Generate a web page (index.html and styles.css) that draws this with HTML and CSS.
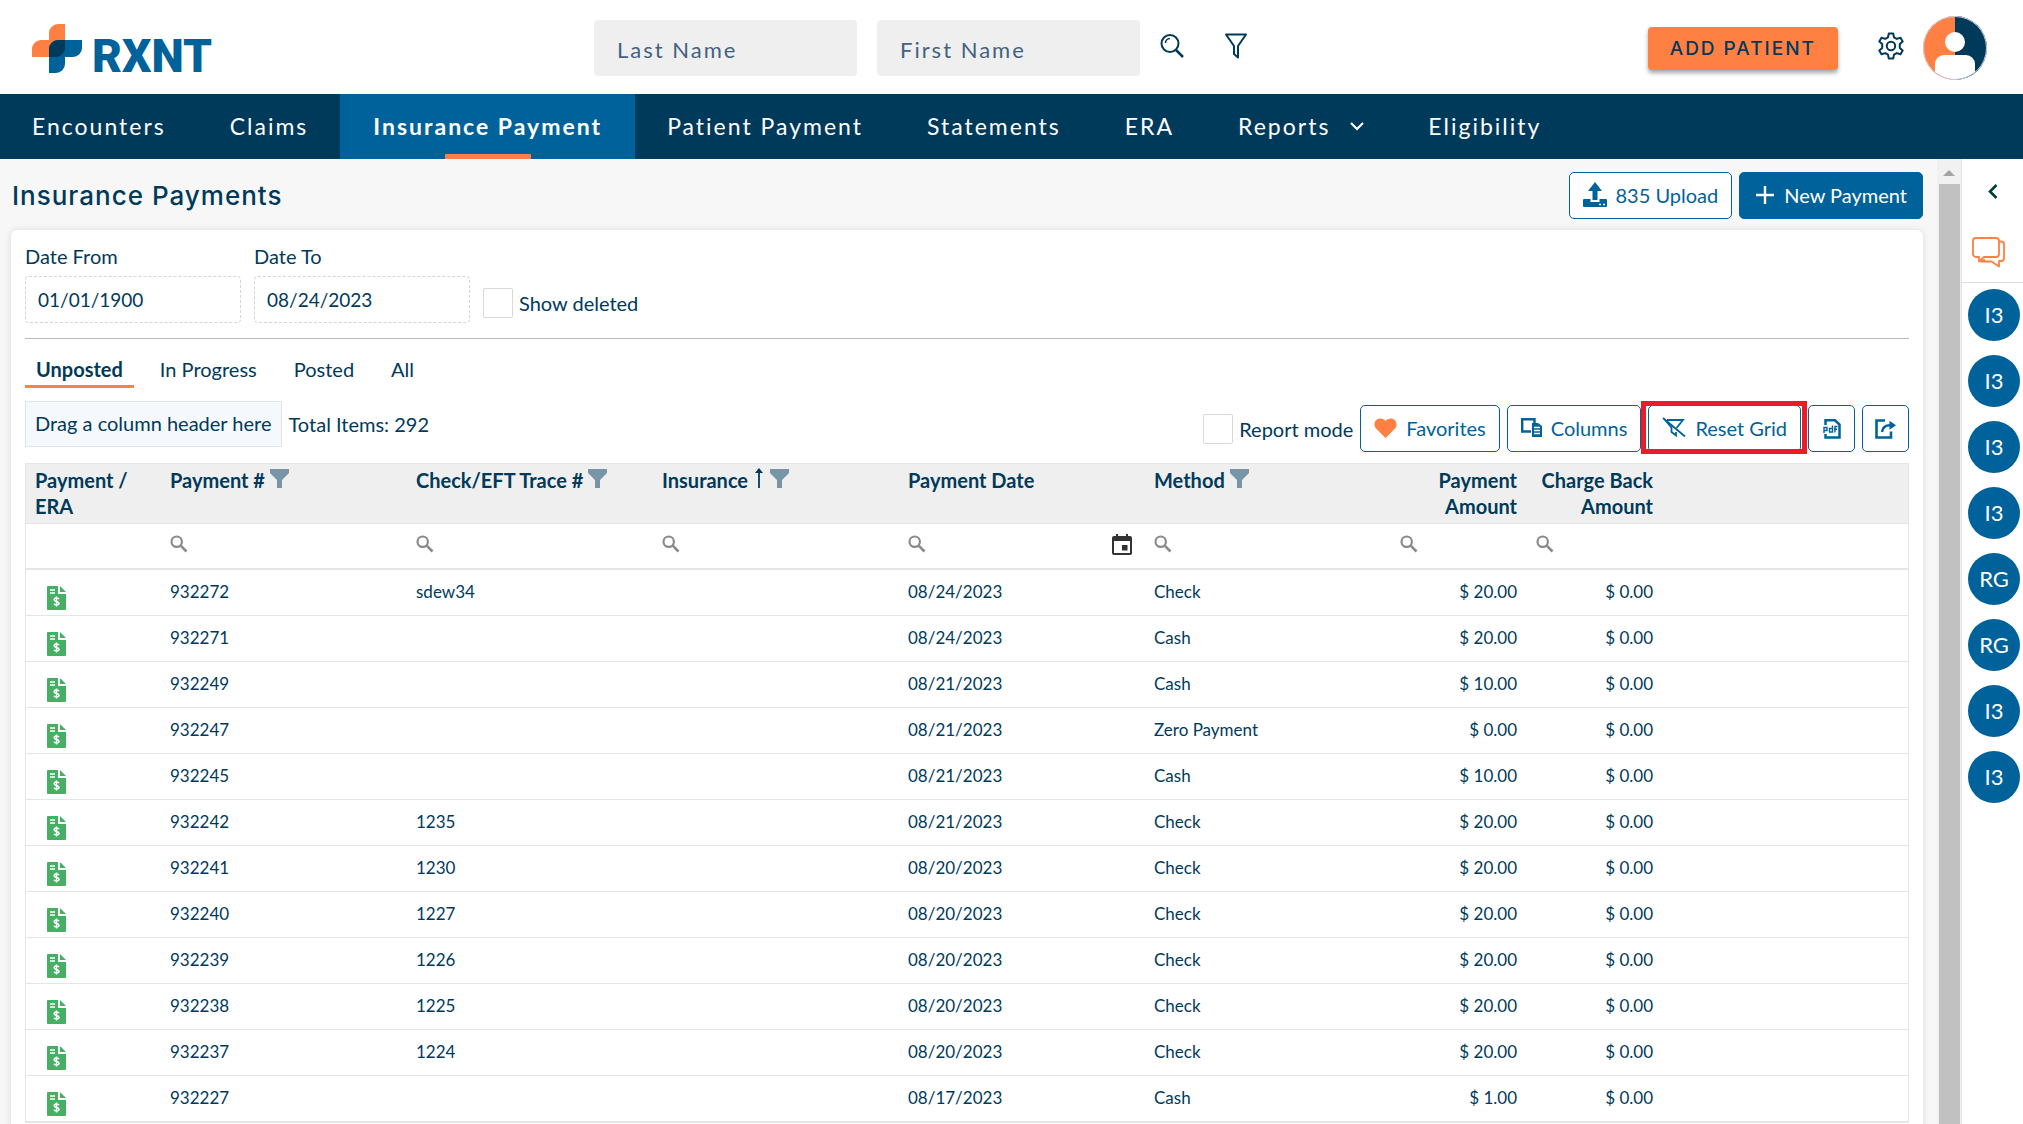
FILE: index.html
```
<!DOCTYPE html>
<html lang="en">

<head>
  <meta charset="UTF-8">
  <meta name="viewport" content="width=device-width, initial-scale=1.0">
  <title>RXNT - Insurance Payments</title>
  <link rel="stylesheet" href="styles.css">
</head>

<body>

  <!-- Shared icons -->
  <svg class="sprite" aria-hidden="true">
    <symbol id="icon-funnel" viewBox="0 0 19 19">
      <path d="M0 0H19V4L12 11V19H7V11L0 4Z" fill="currentColor" />
    </symbol>
    <symbol id="icon-search" viewBox="0 0 18 18">
      <circle cx="6.7" cy="6.7" r="5.2" fill="none" stroke="currentColor" stroke-width="2.2" />
      <path d="M10.7 10.7L16.5 16.5" stroke="currentColor" stroke-width="2.6" />
    </symbol>
    <symbol id="icon-file" viewBox="0 0 19 24">
      <path d="M1 0H11V8H19V23a1 1 0 0 1-1 1H1a1 1 0 0 1-1-1V1a1 1 0 0 1 1-1Z" fill="#45b063" />
      <path d="M13 0L19 6H13Z" fill="#45b063" />
      <path d="M3 4H8M3 7H8M9.500 10.500V20.500M12 13.200C11.500 12.300 10.700 12 9.500 12C8 12 7.200 12.700 7.200 13.700C7.200 16 12 14.900 12 17.300C12 18.400 11 19 9.500 19C8.200 19 7.400 18.600 7 17.700" fill="none" stroke="#fff" stroke-width="1.500" />
    </symbol>
  </svg>

  <header class="topbar">
    <a class="logo" href="#" aria-label="RXNT home">
      <svg width="50" height="49" viewBox="0 0 50 49">
        <path d="M33 0V33H0V25a9 9 0 0 1 9-9H17V9a9 9 0 0 1 9-9Z" fill="#ff8042" />
        <path d="M50 16V24a9 9 0 0 1-9 9H33V40a9 9 0 0 1-9 9H17V25a9 9 0 0 1 9-9Z" fill="#00629b" />
        <path d="M17 33V25a9 9 0 0 1 9-9H33V24a9 9 0 0 1-9 9Z" fill="#003a5b" />
      </svg>
      <span>RXNT</span>
    </a>

    <form class="patient-search">
      <input type="text" placeholder="Last Name" aria-label="Last Name">
      <input type="text" placeholder="First Name" aria-label="First Name">
      <button type="button" class="icon-btn" aria-label="Search">
        <svg width="24" height="26" viewBox="0 0 24 26" fill="none" stroke="currentColor" stroke-width="2">
          <circle cx="10" cy="10.500" r="8.500" />
          <path d="M16 17L23 24" stroke-width="2.500" />
          <path d="M5.500 10C5.500 7.500 7.500 5.500 10 5.500" stroke-width="1.600" />
        </svg>
      </button>
      <button type="button" class="icon-btn" aria-label="Filter">
        <svg width="24" height="26" viewBox="0 0 24 26" fill="none" stroke="currentColor" stroke-width="2">
          <path d="M2 1.500H22L14 13V24.500L10 21V13Z" stroke-linejoin="round" />
        </svg>
      </button>
    </form>

    <div class="account">
      <button type="button" class="add-patient">ADD PATIENT</button>
      <button type="button" class="icon-btn" aria-label="Settings">
        <svg width="28" height="28" viewBox="0 0 28 28" fill="none" stroke="currentColor" stroke-width="2" stroke-linejoin="round">
          <path d="M11.800 1.500H16.200L17 5.300L19.800 6.900L23.500 5.700L25.700 9.500L22.800 12.100V15.900L25.700 18.500L23.500 22.300L19.800 21.100L17 22.700L16.200 26.500H11.800L11 22.700L8.200 21.100L4.500 22.300L2.300 18.500L5.200 15.900V12.100L2.300 9.500L4.500 5.700L8.200 6.900L11 5.300Z" />
          <circle cx="14" cy="14" r="4.200" />
        </svg>
      </button>
      <button type="button" class="avatar" aria-label="Account">
        <svg width="64" height="64" viewBox="0 0 64 64">
          <path d="M32 0A32 32 0 0 0 32 64Z" fill="#ff8042" />
          <path d="M32 0A32 32 0 0 1 32 64Z" fill="#003a5b" />
          <circle cx="32" cy="26" r="10" fill="#fff" />
          <path d="M12 56V48a9 9 0 0 1 9-9H43a9 9 0 0 1 9 9V56A31.500 31.500 0 0 1 12 56Z" fill="#fff" />
          <circle cx="32" cy="32" r="31.500" fill="none" stroke="#ccd" stroke-width="1" />
        </svg>
      </button>
    </div>
  </header>

  <nav class="tabs-nav">
    <a href="#">Encounters</a>
    <a href="#">Claims</a>
    <a href="#" class="active">Insurance Payment</a>
    <a href="#">Patient Payment</a>
    <a href="#">Statements</a>
    <a href="#">ERA</a>
    <a href="#">Reports
      <svg width="14" height="10" viewBox="0 0 14 10" fill="none" stroke="currentColor" stroke-width="2.200"><path d="M1 2L7 8L13 2" /></svg>
    </a>
    <a href="#">Eligibility</a>
  </nav>

  <div class="page">
    <main class="content">
      <div class="page-head">
        <h1>Insurance Payments</h1>
        <div class="btn-group">
          <button type="button" class="btn">
            <svg width="24" height="26" viewBox="0 0 24 26" fill="currentColor">
              <path d="M12 0L19 9H14.500V18H9.500V9H5Z" />
              <path d="M1 17H7.500V20H16.500V17H23a1 1 0 0 1 1 1V24a1 1 0 0 1-1 1H1a1 1 0 0 1-1-1V18a1 1 0 0 1 1-1Z" />
              <path d="M16 22.500H18M20 22.500H22" stroke="#fff" stroke-width="1.500" />
            </svg>
            835 Upload
          </button>
          <button type="button" class="btn primary">
            <svg width="20" height="20" viewBox="0 0 20 20" stroke="currentColor" stroke-width="2.400"><path d="M10 1V19M1 10H19" /></svg>
            New Payment
          </button>
        </div>
      </div>

      <section class="panel">
        <div class="filters">
          <div class="field">
            <label for="dateFrom">Date From</label>
            <input type="text" id="dateFrom" value="01/01/1900">
          </div>
          <div class="field">
            <label for="dateTo">Date To</label>
            <input type="text" id="dateTo" value="08/24/2023">
          </div>
          <label class="check"><input type="checkbox"> Show deleted</label>
        </div>

        <div class="status-tabs">
          <button type="button" class="active">Unposted</button>
          <button type="button">In Progress</button>
          <button type="button">Posted</button>
          <button type="button">All</button>
        </div>

        <div class="toolbar">
          <div class="group-info">
            <div class="drop-zone">Drag a column header here</div>
            <span>Total Items: 292</span>
          </div>
          <div class="btn-group">
            <label class="check"><input type="checkbox"> Report mode</label>
            <button type="button" class="btn">
              <svg width="23" height="20" viewBox="0 0 23 20"><path d="M11.500 20L2 10.500C-3 4.500 5-3.500 11.500 3C18-3.500 26 4.500 21 10.500Z" fill="#ff8042" /></svg>
              Favorites
            </button>
            <button type="button" class="btn">
              <svg width="21" height="20" viewBox="0 0 21 20" fill="none" stroke="currentColor">
                <path d="M10 13.500H1.200V1.200H13.500V5" stroke-width="2.400" />
                <path d="M11 5H17L21 8V19H11Z" fill="currentColor" stroke="none" />
                <path d="M13 9.500H19M13 12.500H19M13 15.500H19" stroke="#fff" stroke-width="1.300" />
              </svg>
              Columns
            </button>
            <button type="button" class="btn highlighted">
              <svg width="24" height="21" viewBox="0 0 24 21" fill="none" stroke="currentColor" stroke-width="1.800">
                <path d="M5 3H21L14.500 11M9.500 10V15L14 18.500V15" />
                <path d="M3 3L9.500 10.500" />
                <path d="M1 1L23 19.500" />
              </svg>
              Reset Grid
            </button>
            <button type="button" class="btn square" aria-label="Export to PDF">
              <svg width="18" height="20" viewBox="0 0 18 20" fill="none" stroke="currentColor">
                <path d="M2.500 6V1.300H12L16.500 5.500V18.500H2.500V15" stroke-width="2.500" />
                <path d="M1 14V8.500H4V11.500H1M9.500 6.500V13H6.500V9.500H9.500M12 13.500V7.500H14.500M11 10.200H14" stroke-width="1.400" />
              </svg>
            </button>
            <button type="button" class="btn square" aria-label="Share">
              <svg width="21" height="20" viewBox="0 0 21 20" fill="none" stroke="currentColor">
                <path d="M10 1.500H1.500V18.500H16V12.500" stroke-width="2.600" />
                <path d="M7 13C7.500 8.500 10 6.300 15 6.300" stroke-width="2.400" />
                <path d="M14.500 1.800L21 6.300L14.500 10.800Z" fill="currentColor" stroke="none" />
              </svg>
            </button>
          </div>
        </div>

        <table class="grid">
          <colgroup>
            <col class="col-type">
            <col class="col-wide">
            <col class="col-wide">
            <col class="col-wide">
            <col class="col-wide">
            <col class="col-wide">
            <col class="col-amount">
            <col class="col-amount">
            <col>
          </colgroup>
          <thead>
            <tr>
              <th>Payment /<br>ERA</th>
              <th>Payment # <svg class="funnel"><use href="#icon-funnel" /></svg></th>
              <th>Check/EFT Trace # <svg class="funnel"><use href="#icon-funnel" /></svg></th>
              <th>Insurance
                <svg class="sort" viewBox="0 0 8 20"><path d="M4 3V20" stroke="currentColor" stroke-width="1.800" /><path d="M4 0L8 5H0Z" fill="currentColor" /></svg>
                <svg class="funnel"><use href="#icon-funnel" /></svg></th>
              <th>Payment Date</th>
              <th>Method <svg class="funnel"><use href="#icon-funnel" /></svg></th>
              <th class="amount">Payment<br>Amount</th>
              <th class="amount">Charge Back<br>Amount</th>
              <th></th>
            </tr>
            <tr class="filter-row">
              <td></td>
              <td><div class="cell-filter"><svg class="mag"><use href="#icon-search" /></svg><input type="text" aria-label="Filter payment number"></div></td>
              <td><div class="cell-filter"><svg class="mag"><use href="#icon-search" /></svg><input type="text" aria-label="Filter trace number"></div></td>
              <td><div class="cell-filter"><svg class="mag"><use href="#icon-search" /></svg><input type="text" aria-label="Filter insurance"></div></td>
              <td>
                <div class="cell-filter">
                  <svg class="mag"><use href="#icon-search" /></svg>
                  <input type="text" aria-label="Filter payment date">
                  <button type="button" class="calendar" aria-label="Pick a date">
                    <svg width="20" height="21" viewBox="0 0 20 21">
                      <path d="M2 2H4V0H6V2H14V0H16V2H18a2 2 0 0 1 2 2V19a2 2 0 0 1-2 2H2a2 2 0 0 1-2-2V4a2 2 0 0 1 2-2ZM2 7V19H18V7ZM10 11H15.500V16.500H10Z" fill="currentColor" fill-rule="evenodd" />
                    </svg>
                  </button>
                </div>
              </td>
              <td><div class="cell-filter"><svg class="mag"><use href="#icon-search" /></svg><input type="text" aria-label="Filter method"></div></td>
              <td><div class="cell-filter"><svg class="mag"><use href="#icon-search" /></svg><input type="text" aria-label="Filter payment amount"></div></td>
              <td><div class="cell-filter"><svg class="mag"><use href="#icon-search" /></svg><input type="text" aria-label="Filter charge back amount"></div></td>
              <td></td>
            </tr>
          </thead>
          <tbody id="gridRows"></tbody>
        </table>
      </section>
    </main>

    <div class="scrollbar" aria-hidden="true">
      <svg width="12" height="6" viewBox="0 0 12 6"><path d="M6 0L12 6H0Z" fill="#a3a3a3" /></svg>
      <div class="thumb"></div>
    </div>

    <aside class="chat-bar">
      <button type="button" class="collapse" aria-label="Expand">
        <svg width="10" height="15" viewBox="0 0 10 15" fill="none" stroke="#00402f" stroke-width="2.600"><path d="M8.500 1L2 7.500L8.500 14" /></svg>
      </button>
      <button type="button" class="chat" aria-label="Messages">
        <svg width="33" height="31" viewBox="0 0 33 31" fill="none" stroke="#ff8042" stroke-width="1.800" stroke-linejoin="round">
          <path d="M4 1H24a3 3 0 0 1 3 3V17a3 3 0 0 1-3 3H12L7 24.500V20H4a3 3 0 0 1-3-3V4a3 3 0 0 1 3-3Z" />
          <path d="M27 4.500H29a3 3 0 0 1 3 3V21a3 3 0 0 1-3 3H27V29.500L19.500 24.500H9L13 22.500" />
        </svg>
      </button>
      <div class="people">
        <button type="button">I3</button>
        <button type="button">I3</button>
        <button type="button">I3</button>
        <button type="button">I3</button>
        <button type="button">RG</button>
        <button type="button">RG</button>
        <button type="button">I3</button>
        <button type="button">I3</button>
      </div>
    </aside>
  </div>

  <script>
    // payment #, trace #, date, method, payment amount
    const payments = [
      ['932272', 'sdew34', '08/24/2023', 'Check', '20.00'],
      ['932271', '', '08/24/2023', 'Cash', '20.00'],
      ['932249', '', '08/21/2023', 'Cash', '10.00'],
      ['932247', '', '08/21/2023', 'Zero Payment', '0.00'],
      ['932245', '', '08/21/2023', 'Cash', '10.00'],
      ['932242', '1235', '08/21/2023', 'Check', '20.00'],
      ['932241', '1230', '08/20/2023', 'Check', '20.00'],
      ['932240', '1227', '08/20/2023', 'Check', '20.00'],
      ['932239', '1226', '08/20/2023', 'Check', '20.00'],
      ['932238', '1225', '08/20/2023', 'Check', '20.00'],
      ['932237', '1224', '08/20/2023', 'Check', '20.00'],
      ['932227', '', '08/17/2023', 'Cash', '1.00']
    ];

    document.getElementById('gridRows').innerHTML = payments.map(([number, trace, date, method, amount]) => `
      <tr>
        <td class="type"><svg><use href="#icon-file" /></svg></td>
        <td>${number}</td>
        <td>${trace}</td>
        <td></td>
        <td>${date}</td>
        <td>${method}</td>
        <td class="amount">$ ${amount}</td>
        <td class="amount">$ 0.00</td>
        <td></td>
      </tr>`).join('');
  </script>

</body>

</html>
```
FILE: styles.css
```
* {
  box-sizing: border-box;
}

body {
  display: flex;
  flex-direction: column;
  height: 100vh;
  margin: 0;
  overflow: hidden;
  font-family: Lato, sans-serif;
  font-size: 20px;
  line-height: 24px;
  color: #003a5b;
  background-color: #f7f7f7;
}

button,
input {
  font: inherit;
  color: inherit;
}

button {
  padding: 0;
  border: none;
  background: none;
  cursor: pointer;
}

svg {
  display: block;
  flex: none;
}

.sprite {
  display: none;
}

/* Top bar */
.topbar {
  display: flex;
  flex: none;
  align-items: center;
  height: 94px;
  padding: 2px 36px 0 32px;
  background-color: white;
}

.logo {
  display: flex;
  flex: 0 0 562px;
  align-items: flex-end;
  gap: 10px;
  font-family: Roboto, sans-serif;
  font-size: 46px;
  font-weight: 900;
  line-height: 34px;
  color: #00629b;
  text-decoration: none;
}

.patient-search {
  display: flex;
  align-items: center;
  gap: 20px;
}

.patient-search input {
  width: 263px;
  height: 56px;
  padding: 2px 23px 0;
  border: none;
  border-radius: 4px;
  background-color: #efefef;
  font-size: 22px;
  letter-spacing: 2px;
}

.patient-search input::placeholder {
  color: #44617f;
  opacity: 1;
}

.icon-btn {
  padding-bottom: 5px;
}

.patient-search .icon-btn + .icon-btn {
  margin-left: 20px;
}

.account {
  display: flex;
  align-items: center;
  margin-left: auto;
}

.add-patient {
  height: 43px;
  margin-right: 39px;
  padding: 1px 22px 0;
  border-radius: 4px;
  background-color: #ff8042;
  box-shadow: 0 3px 4px rgba(0, 0, 0, 0.35);
  font-family: Inter, sans-serif;
  font-size: 19px;
  font-weight: 500;
  letter-spacing: 2px;
}

.avatar {
  margin-left: 18px;
}

/* Main navigation */
.tabs-nav {
  display: flex;
  flex: none;
  height: 65px;
  background-color: #003a5b;
}

.tabs-nav a {
  display: flex;
  align-items: center;
  gap: 20px;
  padding: 0 32px 2px;
  color: white;
  font-size: 23px;
  letter-spacing: 2px;
  text-decoration: none;
}

.tabs-nav .active {
  position: relative;
  padding: 0 33px 2px;
  background-color: #00629b;
  font-weight: bold;
}

.tabs-nav .active::after {
  content: "";
  position: absolute;
  bottom: 0;
  left: 50%;
  width: 86px;
  height: 5px;
  margin-left: -43px;
  background-color: #ff8042;
}

/* Page */
.page {
  display: flex;
  flex: 1;
  min-height: 0;
}

.content {
  flex: 1;
  min-width: 0;
  padding: 13px 14px 0 11px;
  overflow: hidden;
}

.page-head {
  display: flex;
  align-items: center;
  justify-content: space-between;
  margin-bottom: 11px;
  padding-left: 1px;
}

h1 {
  margin: 0;
  font-family: Inter, sans-serif;
  font-size: 26px;
  font-weight: 500;
  letter-spacing: 1px;
}

.btn-group {
  display: flex;
  gap: 7px;
}

.btn {
  display: flex;
  align-items: center;
  justify-content: center;
  gap: 9px;
  height: 47px;
  padding: 0 13px 2px;
  border: 1px solid #00629b;
  border-radius: 5px;
  background-color: white;
  color: #00629b;
}

.btn.primary {
  padding: 0 15px 2px;
  background-color: #00629b;
  color: white;
}

.btn.square {
  width: 47px;
  padding: 0;
}

.btn.highlighted {
  position: relative;
}

.btn.highlighted::after {
  content: "";
  position: absolute;
  inset: -5px -7px -3px -8px;
  border: 5px solid #ec1c24;
}

.panel {
  min-height: 100%;
  padding: 14px;
  border-radius: 6px;
  background-color: white;
  box-shadow: 0 0 6px rgba(0, 0, 0, 0.12);
}

.filters {
  display: flex;
  align-items: flex-end;
  gap: 13px;
  padding-bottom: 15px;
  border-bottom: 1px solid #b8b8b8;
}

.field {
  display: flex;
  flex-direction: column;
  gap: 8px;
}

.field input {
  width: 216px;
  height: 47px;
  padding: 0 12px;
  border: 1px dashed #d5d5d5;
  border-radius: 4px;
  background-color: white;
  font-size: 19px;
}

.check {
  display: flex;
  align-items: center;
  gap: 6px;
}

.filters .check {
  height: 40px;
}

.check input {
  appearance: none;
  width: 30px;
  height: 30px;
  margin: 0;
  border: 1px solid #d9d9d9;
  border-radius: 2px;
  background-color: white;
}

.status-tabs {
  display: flex;
  gap: 15px;
  margin: 13px 0;
}

.status-tabs button {
  height: 36px;
  padding: 0 11px;
  border-bottom: 3px solid transparent;
}

.status-tabs .active {
  border-bottom-color: #f5844c;
  font-weight: bold;
}

.toolbar {
  display: flex;
  align-items: flex-end;
  justify-content: space-between;
  margin-bottom: 11px;
}

.group-info {
  display: flex;
  align-items: center;
  gap: 7px;
  padding-bottom: 5px;
}

.drop-zone {
  padding: 9px 9px 11px;
  border: 1px solid #dde3e8;
  background-color: #f5f9fd;
}

/* Grid */
.grid {
  width: 100%;
  table-layout: fixed;
  border: 1px solid #e5e5e5;
  border-spacing: 0;
  font-size: 17px;
}

.col-type {
  width: 135px;
}

.col-wide {
  width: 246px;
}

.col-amount {
  width: 136px;
}

.grid th {
  height: 60px;
  padding: 3px 10px 3px 9px;
  border-bottom: 1px solid #e5e5e5;
  background-color: #efefef;
  font-size: 20px;
  line-height: 26px;
  text-align: left;
  vertical-align: top;
  white-space: nowrap;
}

.grid td {
  height: 46px;
  padding: 0 10px 1px 9px;
  border-bottom: 1px solid #e5e5e5;
}

.grid .filter-row td {
  padding-bottom: 4px;
  border-bottom-width: 2px;
}

.grid .amount {
  text-align: right;
}

.funnel {
  display: inline-block;
  width: 19px;
  height: 19px;
  color: #7795a6;
}

.sort {
  display: inline-block;
  width: 8px;
  height: 20px;
  margin: 0 2px;
}

.cell-filter {
  display: flex;
  align-items: center;
}

.mag {
  width: 18px;
  height: 18px;
  color: #8a8a8a;
}

.cell-filter input {
  flex: 1;
  min-width: 0;
  height: 36px;
  border: none;
  background: none;
}

.calendar {
  margin-right: 3px;
  color: #333;
}

.grid .type {
  padding: 10px 0 0 21px;
}

.type svg {
  width: 19px;
  height: 24px;
}

/* Scrollbar */
.scrollbar {
  display: flex;
  flex-direction: column;
  align-items: center;
  gap: 8px;
  width: 25px;
  padding-top: 11px;
  border-right: 1px solid #e3e3e3;
  background-color: #f1f1f1;
}

.thumb {
  flex: 1;
  width: 21px;
  background-color: #c1c1c1;
}

/* Chat bar */
.chat-bar {
  display: flex;
  flex-direction: column;
  align-items: center;
  width: 61px;
  background-color: white;
}

.collapse {
  padding: 25px 0 38px;
}

.chat {
  width: 100%;
  padding: 0 0 14px 10px;
  border-bottom: 1px solid #ddd;
}

.people {
  display: flex;
  flex-direction: column;
  gap: 14px;
  padding: 6px 0 0 3px;
}

.people button {
  width: 52px;
  height: 52px;
  border-radius: 50%;
  background-color: #00629b;
  color: white;
  font-size: 22px;
}
```
